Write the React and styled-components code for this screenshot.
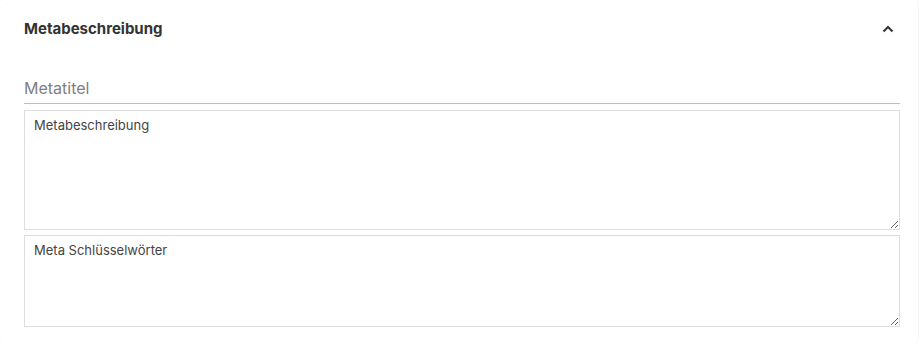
import styled, { createGlobalStyle } from 'styled-components';
import { useState } from 'react';

const GlobalStyle = createGlobalStyle`
  * { box-sizing: border-box; }
  body {
    margin: 0;
    background: #fff;
    font-family: Inter, "Liberation Sans", sans-serif;
  }
`;

const Card = styled.section`
  width: 919px;
  margin: 0 0 0 -1px;
  background: #fff;
  border-radius: 4px;
  box-shadow: 0 0 2px rgba(0, 0, 0, 0.12);
  padding-bottom: 15px;
`;

const Header = styled.div`
  display: flex;
  align-items: center;
  justify-content: space-between;
  height: 57px;
  padding: 0 22px 0 25px;
`;

const Title = styled.h3`
  margin: 0;
  font-size: 15px;
  font-weight: 700;
  color: #333;
`;

const Toggle = styled.button`
  display: flex;
  align-items: center;
  justify-content: center;
  width: 16px;
  height: 16px;
  padding: 0;
  border: none;
  background: none;
  color: #333;
  cursor: pointer;
`;

const Body = styled.div`
  display: flex;
  flex-direction: column;
  gap: 5px;
  padding: 15px 18px 0 25px;
`;

const LineInput = styled.input`
  width: 100%;
  height: 32px;
  padding: 0;
  margin-bottom: 1px;
  border: none;
  border-bottom: 1px solid #bdbdbd;
  font-family: inherit;
  font-size: 16px;
  color: #333;
  outline: none;
  &::placeholder { color: #808080; }
`;

const Area = styled.textarea`
  display: block;
  width: 100%;
  height: ${(p) => p.$h}px;
  padding: 6px 9px;
  border: 1px solid #ddd;
  border-radius: 0;
  font-family: inherit;
  font-size: 13px;
  line-height: 16px;
  color: #333;
  resize: vertical;
  outline: none;
  &::placeholder { color: #444; }
`;

export default function App() {
  const [open, setOpen] = useState(true);
  return (
    <>
      <GlobalStyle />
      <Card>
        <Header>
          <Title>Metabeschreibung</Title>
          <Toggle onClick={() => setOpen(!open)} aria-label="Einklappen">
            <svg width="12" height="8" viewBox="0 0 12 8" fill="none">
              <path d="M1.5 6.5 L6 2 L10.5 6.5" stroke="currentColor" strokeWidth="2" />
            </svg>
          </Toggle>
        </Header>
        {open && (
          <Body>
            <LineInput placeholder="Metatitel" />
            <Area $h={120} placeholder="Metabeschreibung" />
            <Area $h={92} placeholder="Meta Schlüsselwörter" />
          </Body>
        )}
      </Card>
    </>
  );
}
